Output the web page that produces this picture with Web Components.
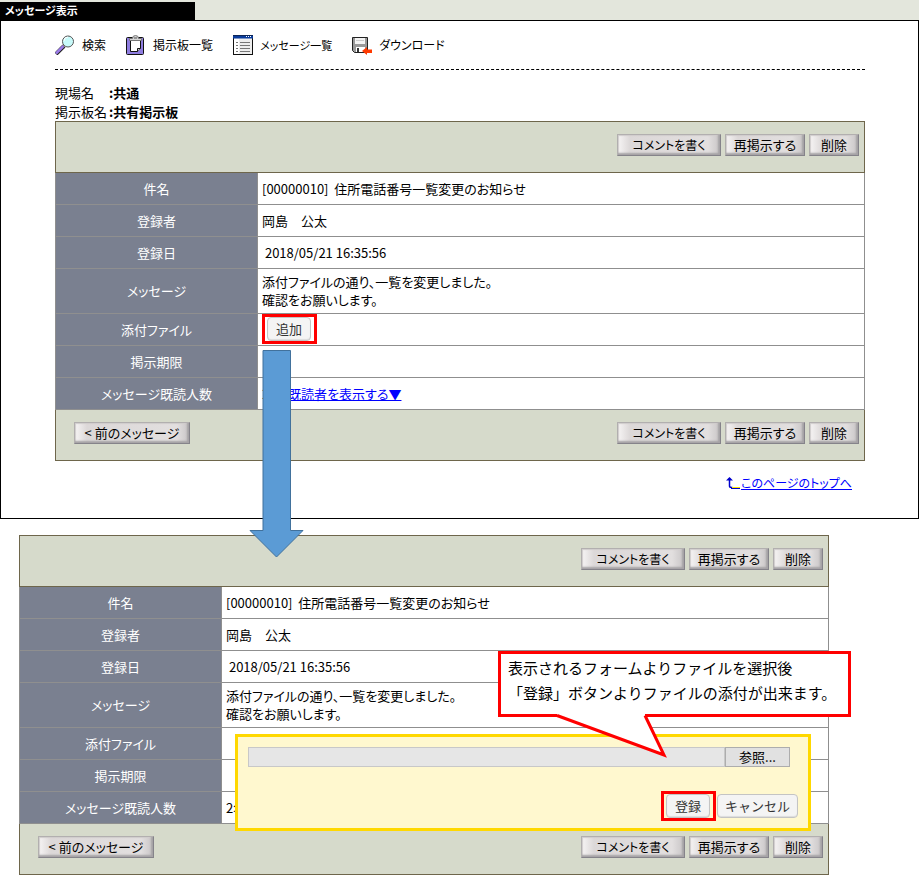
<!DOCTYPE html>
<html lang="ja">
<head>
<meta charset="utf-8">
<title>メッセージ表示</title>
<style>
  body {
    margin: 0;
    background: #fff;
    color: #000;
    font: 13px/18px "Noto Sans CJK JP", sans-serif;
  }
</style>
</head>
<body>
<guide-page></guide-page>

<script>
function define(name, html, setup) {
  const template = document.createElement('template');
  template.innerHTML = html;
  customElements.define(name, class extends HTMLElement {
    constructor() {
      super();
      this.attachShadow({ mode: 'open' }).append(template.content.cloneNode(true));
      if (setup) setup(this, this.shadowRoot);
    }
  });
}

define('bevel-button', `
  <style>
    :host { display: block; }
    button {
      box-sizing: border-box;
      width: var(--button-width, 80px);
      height: 22px;
      padding: 0;
      border: 1px solid;
      border-color: #b2afaf #85838a #85838a #b2afaf;
      background: linear-gradient(to right, #f6f4f4, #dcd8d8 12px, #e2dfdf calc(100% - 12px), #c8c5c6);
      box-shadow: inset -2px -2px 2px #a5a2a5, inset 1px 1px 1px #d0cdcd;
      color: #000;
      font: inherit;
      line-height: 18px;
      font-feature-settings: "palt";
      white-space: nowrap;
    }
  </style>
  <button type="button"><slot></slot></button>`);

define('soft-button', `
  <style>
    :host { display: block; }
    button {
      box-sizing: border-box;
      height: 24px;
      padding: 0 var(--soft-pad, 8px);
      border: 1px solid #c4c4c4;
      border-radius: 4px;
      background: #f4f4f4;
      box-shadow: inset 0 -1px 1px #dcdcdc;
      color: #333;
      font: inherit;
      line-height: 20px;
      white-space: nowrap;
    }
  </style>
  <button type="button"><slot></slot></button>`);

define('red-frame', `
  <style>
    :host {
      display: inline-flex;
      box-sizing: border-box;
      height: 30px;
      padding: 0 3px 0 2px;
      border: 3px solid #f00;
      vertical-align: top;
    }
  </style>
  <slot></slot>`);

define('nav-item', `
  <style>
    :host { display: block; font-size: 12px; }
    a {
      display: flex;
      align-items: center;
      gap: 7px;
      color: #000;
      font-feature-settings: "palt";
      text-decoration: none;
      white-space: nowrap;
    }
  </style>
  <a href="#"><slot name="icon"></slot><span><slot></slot></span></a>`);

define('message-toolbar', `
  <style>
    :host { display: block; border-bottom: 1px dashed #000; }
    nav { display: flex; align-items: center; gap: 20px; height: 48px; }
    svg { display: block; flex: none; }
    .kana { font-size: 11px; }
  </style>
  <nav>
    <nav-item>
      <svg slot="icon" width="20" height="20" viewBox="0 0 20 20">
        <path d="M1 19L9 11" stroke="#222" stroke-width="4"/>
        <path d="M1 18.500L8.500 11" stroke="#9a7be8" stroke-width="2.500"/>
        <circle cx="13" cy="6.500" r="5.500" fill="#c8fafa" stroke="#555" stroke-width="1"/>
        <path d="M9 6a4 4 0 0 1 4-4" fill="none" stroke="#fff"/>
      </svg>検索
    </nav-item>
    <nav-item>
      <svg slot="icon" width="20" height="20" viewBox="0 0 20 20">
        <rect x=".5" y="2.500" width="17" height="17" rx="1" fill="#8f7de0" stroke="#111"/>
        <path d="M4.500 5.500h10v8l-3 3h-7z" fill="#fff" stroke="#111"/>
        <path d="M11.500 16.500v-3h3" fill="#ccc" stroke="#111"/>
        <path d="M3.500 5.500v-2h3q0-3 3-3t3 3h3v2z" fill="#d5d5d5" stroke="#777"/>
        <path d="M8 3h3" stroke="#555"/>
      </svg>掲示板一覧
    </nav-item>
    <nav-item class="kana">
      <svg slot="icon" width="20" height="20" viewBox="0 0 20 20">
        <rect x=".5" y=".5" width="19" height="19" fill="#eee" stroke="#111"/>
        <rect x="1" y="4" width="5" height="15" fill="#fff"/>
        <path d="M0 2h20" stroke="#0a3c9c" stroke-width="3"/>
        <path d="M13 1.500h1m1 0h1m1 0h1" stroke="#fff"/>
        <path d="M3 7.500h2m2 0h10M3 10.500h2m2 0h10M3 13.500h2m2 0h10M3 16.500h2m2 0h10" stroke="#777"/>
      </svg>メッセージ一覧
    </nav-item>
    <nav-item>
      <svg slot="icon" width="20" height="20" viewBox="0 0 20 20">
        <path d="M.5 2.500h15v15h-13l-2-2z" fill="#999" stroke="#222"/>
        <path d="M3 3h10v6H3z" fill="#f4f4f4"/>
        <path d="M4 5.500h8" stroke="#ccc"/>
        <path d="M4 12h9v5H4z" fill="#fff"/>
        <path d="M5 13h2v4H5z" fill="#333"/>
        <path d="M10 16l5-4v2.500h5v3.500h-5v2z" fill="#ff3a00"/>
      </svg>ダウンロード
    </nav-item>
  </nav>`);

define('message-card', `
  <style>
    :host { display: block; position: relative; }
    .bar {
      display: flex;
      align-items: flex-start;
      gap: 4px;
      box-sizing: border-box;
      padding: 12px 5px 0 18px;
      border: 1px solid #6e664b;
      background: #d6dacb;
    }
    .head { height: 52px; justify-content: flex-end; }
    .foot { height: 51px; border-top: 0; }
    .foot .first { margin-right: auto; }
    .wide { --button-width: 104px; font-size: 12px; }
    .small { --button-width: 50px; }
    .first { --button-width: 116px; }
    table { width: 100%; border-collapse: separate; border-spacing: 0; table-layout: fixed; }
    th, td { height: 31px; padding: 0; border-bottom: 1px solid #8f8f8f; }
    th {
      width: 201px;
      border-left: 1px solid #8f8f8f;
      border-right: 1px solid #8f8f8f;
      background: #7a8090;
      color: #fff;
      font-weight: normal;
      font-feature-settings: "palt";
    }
    td {
      padding-left: 4px;
      border-right: 1px solid #8f8f8f;
      font-feature-settings: "palt";
      text-align: left;
    }
    td.top { vertical-align: top; }
    .tall th, .tall td { height: 44px; }
    a { color: #00f; }
  </style>
  <div class="bar head">
    <bevel-button class="wide">コメントを書く</bevel-button>
    <bevel-button>再掲示する</bevel-button>
    <bevel-button class="small">削除</bevel-button>
  </div>
  <table>
    <tr><th scope="row">件名</th><td>[00000010]&nbsp; 住所電話番号一覧変更のお知らせ</td></tr>
    <tr><th scope="row">登録者</th><td>岡島　公太</td></tr>
    <tr><th scope="row">登録日</th><td>&nbsp;2018/05/21 16:35:56</td></tr>
    <tr class="tall"><th scope="row">メッセージ</th><td>添付ファイルの通り、一覧を変更しました。<br>確認をお願いします。</td></tr>
    <tr><th scope="row">添付ファイル</th><td class="top"><slot name="attachment"></slot></td></tr>
    <tr><th scope="row">掲示期限</th><td></td></tr>
    <tr><th scope="row">メッセージ既読人数</th><td>2名&nbsp; <a href="#">既読者を表示する▼</a></td></tr>
  </table>
  <div class="bar foot">
    <bevel-button class="first">&lt; 前のメッセージ</bevel-button>
    <bevel-button class="wide">コメントを書く</bevel-button>
    <bevel-button>再掲示する</bevel-button>
    <bevel-button class="small">削除</bevel-button>
  </div>
  <slot></slot>`);

define('upload-form', `
  <style>
    :host {
      display: block;
      box-sizing: border-box;
      border: 3px solid #ffd800;
      background: #fff8cf;
    }
    form { display: flex; flex-direction: column; gap: 24px; padding: 10px 10px 7px; }
    .file { display: flex; margin-right: 8px; }
    input {
      flex: 1;
      min-width: 0;
      box-sizing: border-box;
      height: 20px;
      padding: 0 4px;
      border: 1px solid #c8c8c8;
      background: #e6e6e6;
      font: inherit;
    }
    .browse {
      box-sizing: border-box;
      width: 65px;
      height: 20px;
      padding: 0;
      border: 1px solid #adadad;
      background: #e1e1e1;
      color: #000;
      font: inherit;
      line-height: 18px;
    }
    .actions { display: flex; justify-content: flex-end; align-items: center; gap: 1px; }
    .cancel { --soft-pad: 7px; }
  </style>
  <form>
    <div class="file">
      <input type="text" aria-label="添付ファイル" readonly>
      <button class="browse" type="button">参照...</button>
    </div>
    <div class="actions">
      <red-frame><soft-button>登録</soft-button></red-frame>
      <soft-button class="cancel">キャンセル</soft-button>
    </div>
  </form>`);

define('speech-callout', `
  <style>
    :host {
      display: block;
      box-sizing: border-box;
      width: 353px;
      height: 66px;
      padding: 1px 0 0 7px;
      border: 3px solid #f00;
      background: #fff;
      font-size: 15px;
      line-height: 25px;
      white-space: nowrap;
    }
    svg { position: absolute; left: 53px; top: 60px; }
  </style>
  <slot></slot>
  <svg width="116" height="46" viewBox="0 0 116 46">
    <path d="M3 0V1L5 1.500L110 41L91 1.500V0z" fill="#fff"/>
    <path d="M3 1.500L110 41L91 1.500" fill="none" stroke="#f00" stroke-width="3"/>
  </svg>`);

define('message-window', `
  <style>
    :host { display: block; }
    .strip { display: flex; height: 20px; padding-top: 2px; box-sizing: border-box; background: #e3e6dc; }
    h1 {
      box-sizing: border-box;
      width: 195px;
      height: 18px;
      margin: 0;
      padding-left: 5px;
      background: #000;
      color: #fff;
      font-size: 11px;
      line-height: 17px;
      font-feature-settings: "palt";
    }
    .body { padding: 0 53px 0 54px; border: 1px solid #000; }
    dl {
      display: grid;
      grid-template-columns: 54px 1fr;
      margin: 0;
      padding-top: 13px;
      line-height: 19px;
    }
    dd { margin: 0; font-weight: bold; }
    .top-link { display: flex; justify-content: flex-end; align-items: flex-start; height: 44px; padding: 13px 13px 0 0; }
    .top-link a {
      display: flex;
      align-items: center;
      color: #00f;
      font-size: 12px;
      font-feature-settings: "palt";
    }
  </style>
  <div class="strip"><h1>メッセージ表示</h1></div>
  <div class="body">
    <message-toolbar></message-toolbar>
    <dl>
      <dt>現場名</dt><dd>:共通</dd>
      <dt>掲示板名</dt><dd>:共有掲示板</dd>
    </dl>
    <message-card>
      <red-frame slot="attachment"><soft-button>追加</soft-button></red-frame>
    </message-card>
    <div class="top-link">
      <a href="#"><svg width="16" height="14" viewBox="0 0 16 14">
        <path d="M4.500 2v8q0 1.500 2 1.500h1" fill="none" stroke="#00c" stroke-width="1.500"/>
        <path d="M1 4.500l3.500-3.500L8 4.500z" fill="#00c"/>
        <path d="M7 11.500h8" stroke="#ffe600"/>
        <path d="M6 12.500h9" stroke="#00c"/>
      </svg><span>このページのトップへ</span></a>
    </div>
  </div>`);

define('guide-page', `
  <style>
    :host { display: block; position: relative; padding-bottom: 2px; }
    .result { margin: 16px 90px 0 19px; }
    .arrow { position: absolute; left: 249px; top: 350px; }
    upload-form { position: absolute; left: 216px; right: 18px; top: 199px; }
    speech-callout { position: absolute; left: 479px; top: 116px; }
  </style>
  <message-window></message-window>
  <message-card class="result">
    <upload-form></upload-form>
    <speech-callout>表示されるフォームよりファイルを選択後<br>「登録」ボタンよりファイルの添付が出来ます。</speech-callout>
  </message-card>
  <svg class="arrow" width="56" height="208" viewBox="0 0 56 208">
    <path d="M14 .5H41.500V180.500H54L27.500 207L1 180.500H14z" fill="#5b9bd5" stroke="#41719c"/>
  </svg>`);
</script>
</body>
</html>
